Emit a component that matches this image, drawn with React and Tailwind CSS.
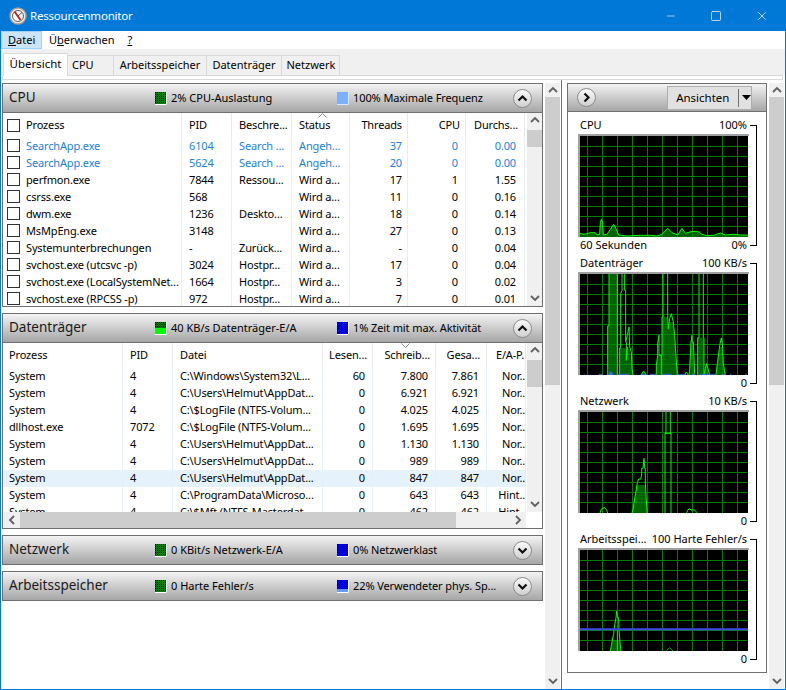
import { X, Minus, Square } from 'lucide-react';

const cpuCols = [
  { w: 'w-[179px]', cell: 'pl-[23px]', head: 'pl-[23px]' },
  { w: 'w-[50px]', cell: 'pl-[7px]', head: 'pl-[7px]' },
  { w: 'w-[60px]', cell: 'pl-[7px]', head: 'pl-[7px]' },
  { w: 'w-[58px]', cell: 'pl-[7px]', head: 'pl-[7px]' },
  { w: 'w-[58px]', cell: 'pr-[5px] text-right', head: 'pr-[5px] justify-end' },
  { w: 'w-[58px]', cell: 'pr-[7px] text-right', head: 'pr-[5px] justify-end' },
  { w: 'w-[59px]', cell: 'pr-[8px] text-right', head: 'pl-[8px]' },
];

const cpuHead = ['Prozess', 'PID', 'Beschre...', 'Status', 'Threads', 'CPU', 'Durchs...'];

const cpuRows = [
  ['SearchApp.exe', '6104', 'Search ...', 'Angeh...', '37', '0', '0.00', true],
  ['SearchApp.exe', '5624', 'Search ...', 'Angeh...', '20', '0', '0.00', true],
  ['perfmon.exe', '7844', 'Ressou...', 'Wird a...', '17', '1', '1.55'],
  ['csrss.exe', '568', '', 'Wird a...', '11', '0', '0.16'],
  ['dwm.exe', '1236', 'Deskto...', 'Wird a...', '18', '0', '0.14'],
  ['MsMpEng.exe', '3148', '', 'Wird a...', '27', '0', '0.13'],
  ['Systemunterbrechungen', '-', 'Zurück...', 'Wird a...', '-', '0', '0.04'],
  ['svchost.exe (utcsvc -p)', '3024', 'Hostpr...', 'Wird a...', '17', '0', '0.04'],
  ['svchost.exe (LocalSystemNet...', '1664', 'Hostpr...', 'Wird a...', '3', '0', '0.02'],
  ['svchost.exe (RPCSS -p)', '972', 'Hostpr...', 'Wird a...', '7', '0', '0.01'],
];

const diskCols = [
  { w: 'w-[120px]', cell: 'pl-[6px]', head: 'pl-[6px]' },
  { w: 'w-[50px]', cell: 'pl-[7px]', head: 'pl-[7px]' },
  { w: 'w-[150px]', cell: 'pl-[7px]', head: 'pl-[7px]' },
  { w: 'w-[50px]', cell: 'pr-[7px] text-right', head: 'pr-[5px] justify-end' },
  { w: 'w-[63px]', cell: 'pr-[7px] text-right', head: 'pr-[5px] justify-end' },
  { w: 'w-[51px]', cell: 'pr-[7px] text-right', head: 'pr-[6px] justify-end' },
  { w: 'w-[39px]', cell: 'pr-0 text-right', head: 'pr-[1px] justify-end' },
];

const diskHead = ['Prozess', 'PID', 'Datei', 'Lesen...', 'Schreib...', 'Gesa...', 'E/A-P.'];

const diskRows = [
  ['System', '4', 'C:\\Windows\\System32\\L...', '60', '7.800', '7.861', 'Nor..'],
  ['System', '4', 'C:\\Users\\Helmut\\AppDat...', '0', '6.921', '6.921', 'Nor..'],
  ['System', '4', 'C:\\$LogFile (NTFS-Volum...', '0', '4.025', '4.025', 'Nor..'],
  ['dllhost.exe', '7072', 'C:\\$LogFile (NTFS-Volum...', '0', '1.695', '1.695', 'Nor..'],
  ['System', '4', 'C:\\Users\\Helmut\\AppDat...', '0', '1.130', '1.130', 'Nor..'],
  ['System', '4', 'C:\\Users\\Helmut\\AppDat...', '0', '989', '989', 'Nor..'],
  ['System', '4', 'C:\\Users\\Helmut\\AppDat...', '0', '847', '847', 'Nor..'],
  ['System', '4', 'C:\\ProgramData\\Microso...', '0', '643', '643', 'Hint..'],
  ['System', '4', 'C:\\$Mft (NTFS-Masterdat...', '0', '462', '462', 'Hint..'],
];

function Chevron({ dir = 'up', className = '' }) {
  const pts = { up: '1,6 5,2 9,6', down: '1,2 5,6 9,2', left: '6,1 2,5 6,9', right: '2,1 6,5 2,9' }[dir];
  const box = dir === 'up' || dir === 'down' ? '0 0 10 8' : '0 0 8 10';
  const size = dir === 'up' || dir === 'down' ? 'w-[10px] h-[8px]' : 'w-[8px] h-[10px]';
  return (
    <svg viewBox={box} className={size + ' ' + className}>
      <polyline points={pts} fill="none" stroke="#606060" strokeWidth="1.8" />
    </svg>
  );
}

function VScroll({ thumb, className = '' }) {
  return (
    <div className={'flex flex-col items-center bg-[#f0f0f0] w-[15px] shrink-0 ' + className}>
      <div className="h-[14px] flex items-center justify-center shrink-0"><Chevron dir="up" /></div>
      <div className={'w-full bg-[#cdcdcd] ' + thumb} />
      <div className="flex-1" />
      <div className="h-[17px] flex items-center justify-center shrink-0"><Chevron dir="down" /></div>
    </div>
  );
}

function Legend({ color, dots = true, fillColor, fillFrom = 13, id }) {
  return (
    <svg width="12" height="13" className="shrink-0">
      <defs>
        <pattern id={id} width="2" height="2" patternUnits="userSpaceOnUse">
          <rect width="2" height="2" fill={color} />
          <rect width="1" height="1" fill="#000" />
        </pattern>
      </defs>
      <rect width="12" height="13" fill={dots ? 'url(#' + id + ')' : color} />
      {fillColor && <rect y={fillFrom} width="12" height={13 - fillFrom} fill={fillColor} />}
      <path d="M11.5 0V12.5H0" fill="none" stroke={dots ? '#fff' : '#d8e6ff'} />
    </svg>
  );
}

function RoundButton({ dir }) {
  const pts = { up: '3.5,9.5 7.5,5.5 11.5,9.5', down: '3.5,5.5 7.5,9.5 11.5,5.5', right: '5.5,3.5 9.5,7.5 5.5,11.5' }[dir];
  return (
    <div className="w-[19px] h-[19px] rounded-full border border-[#8c8c8c] bg-linear-to-b from-[#fafafa] to-[#d0d0d0] flex items-center justify-center shrink-0">
      <svg viewBox="0 0 15 15" className="w-[15px] h-[15px]">
        <polyline points={pts} fill="none" stroke="#111" strokeWidth="2.2" />
      </svg>
    </div>
  );
}

function SectionHeader({ title, legend1, text1, legend2, text2, dir }) {
  return (
    <div className="flex items-center h-[28px] bg-linear-to-b from-[#f4f4f4] to-[#a6a6a6]">
      <div className="w-[152px] pl-[6px] pb-[1px] text-[13.5px] text-[#1a1a1a]">{title}</div>
      {legend1}
      <div className="w-[170px] pl-[4px] whitespace-nowrap">{text1}</div>
      {legend2}
      <div className="flex-1 pl-[4px] tracking-[-0.1px] whitespace-nowrap">{text2}</div>
      <div className="mr-[10px]"><RoundButton dir={dir} /></div>
    </div>
  );
}

function HeadRow({ cols, head, h, check }) {
  return (
    <div className={'relative flex items-center shrink-0 tracking-[-0.15px] ' + h}>
      {check && <div className="absolute left-[4px] top-[6px] w-[13px] h-[13px] border border-[#333]" />}
      {cols.map((c, i) => (
        <div key={i} className={'h-full flex items-center whitespace-nowrap border-r border-[#e9e9e9] ' + c.w + ' ' + c.head}>
          {head[i]}
        </div>
      ))}
    </div>
  );
}

function Row({ cols, row, check, active, lead = 'leading-[17px]' }) {
  const blue = row[7];
  return (
    <div className={'relative flex h-[17px] shrink-0 tracking-[-0.15px] ' + (blue ? 'text-[#1a7fe0] ' : '') + (active ? 'bg-[#e5f1fb]' : '')}>
      {check && <div className="absolute left-[4px] top-[2px] w-[13px] h-[13px] border border-[#333]" />}
      {cols.map((c, i) => (
        <div key={i} className={'whitespace-nowrap overflow-hidden border-r border-[#e5effa] ' + lead + ' ' + c.w + ' ' + c.cell}>
          {row[i]}
        </div>
      ))}
    </div>
  );
}

// grid sits on whole pixels, 15px columns and 10px rows
function Grid() {
  const v = [7.5, 22.5, 37.5, 52.5, 67.5, 82.5, 97.5, 112.5, 127.5, 142.5, 157.5];
  const h = [10.5, 20.5, 30.5, 40.5, 50.5, 60.5, 70.5, 80.5, 90.5];
  return (
    <g stroke="#008000" strokeWidth="1">
      {v.map(x => <line key={x} x1={x} x2={x} y1="0" y2="101" />)}
      {h.map(y => <line key={y} x1="0" x2="168" y1={y} y2={y} />)}
    </g>
  );
}

// curve points below were read off a 3x crop, so scale them back down
function Data({ children }) {
  return <g transform="scale(0.3333) translate(-16 -16)">{children}</g>;
}

function Area({ pts }) {
  return <polygon points={pts} fill="#006400" />;
}

function Line({ pts }) {
  return <polyline points={pts} fill="none" stroke="#00ff00" strokeWidth="3" />;
}

function Frame({ children }) {
  return (
    <div className="w-[171px] h-[103px] border-t-2 border-l-2 border-[#a0a0a0]">
      <svg viewBox="0 0 168 101" className="w-[168px] h-[101px] bg-black block">
        {children}
      </svg>
    </div>
  );
}

function CpuChart() {
  const pts = '16,308 27,311 37,309 47,306 62,306 67,313 75,311 77,276 80,266 84,276 86,313 97,311 107,296 117,281 125,296 132,313 157,316 197,314 227,314 247,316 262,311 279,293 292,306 309,313 322,293 332,308 349,303 369,302 382,311 397,315 417,314 437,307 452,313 477,311 497,313 522,313';
  return (
    <Frame>
      <Data><Area pts={pts + ' 522,319 16,319'} /></Data>
      <Grid />
      <Data><Line pts={pts} /></Data>
    </Frame>
  );
}

function DiskChart() {
  const blue = [[72, 85], [130, 165], [198, 215], [225, 245], [262, 290], [310, 335], [350, 362], [375, 425], [440, 452], [466, 470], [512, 516], [28, 30], [45, 47]];
  return (
    <Frame>
      <Data>
        <Area pts="99,319 99,172 103,172 103,16 128,16 128,319" />
        <Area pts="135,319 135,238 152,238 155,275 158,235 166,250 171,295 175,319" />
        <Area pts="245,319 245,290 249,260 262,260 262,145 279,145 281,180 285,160 296,160 300,200 303,250 308,319" />
        <Area pts="343,319 347,262 349,220 356,220 358,262 360,319" />
        <Area pts="369,319 369,207 388,207 388,319" />
        <Area pts="388,319 392,300 396,285 400,300 405,319" />
        <Area pts="424,319 428,285 432,255 436,235 444,235 446,285 452,319" />
        <Area pts="199,319 207,307 215,319" />
      </Data>
      <Grid />
      <Data>
        <Line pts="99,319 99,172 103,172 103,16" />
        <Line pts="128,16 128,319" />
        <Line pts="135,319 135,238 138,238 138,75 142,65 142,16" />
        <Line pts="150,16 150,65 153,65 153,220 158,200 163,175 165,235 170,250 172,300 175,319" />
        <Line pts="155,220 155,275 158,235" />
        <Line pts="245,319 245,290 249,260 249,225 253,200 253,260 262,260 262,145 265,145 265,16" />
        <Line pts="279,16 279,140 281,180 285,150 290,135 296,160 300,200 303,250 308,319" />
        <Line pts="260,260 260,319" />
        <Line pts="343,319 345,300 347,262 349,220 352,200 352,220 356,220 358,262 360,319" />
        <Line pts="369,319 369,207 373,207 373,16" />
        <Line pts="386,16 386,207 388,207 388,319" />
        <Line pts="388,319 392,300 396,285 400,300 405,319" />
        <Line pts="424,319 428,285 432,255 436,225 440,208 444,235 446,285 452,319" />
        <Line pts="199,319 207,307 215,319" />
        <Line pts="330,319 335,310 340,319" />
        {blue.map(([a, b]) => <line key={a} x1={a} x2={b} y1="317" y2="317" stroke="#4169e1" strokeWidth="3" />)}
        <polygon points="100,319 108,306 118,319" fill="#4169e1" />
      </Data>
    </Frame>
  );
}

function NetChart() {
  return (
    <Frame>
      <Data><Area pts="172,319 180,275 186,235 212,235 216,300 218,319" /></Data>
      <Grid />
      <Data>
        <Line pts="172,319 176,305 180,275 184,255 188,228 192,217 198,217 201,205 201,185 205,185 208,155 210,185 212,185 212,230 216,300 218,319" />
        <Line pts="271,319 271,80 274,80 274,16" />
        <Line pts="287,16 287,80 289,80 289,319" />
        <line x1="271" x2="289" y1="80" y2="80" stroke="#00ff00" strokeWidth="3" />
        <Line pts="76,319 80,307 90,303 96,310 99,319" />
        <Line pts="336,319 340,309 345,307 350,310 360,310 368,319" />
      </Data>
    </Frame>
  );
}

function MemChart() {
  return (
    <Frame>
      <Data>
        <g transform="translate(-43 -43)">
          <polygon points="150,362 157,330 178,330 182,362" fill="#006400" />
        </g>
      </Data>
      <Grid />
      <Data>
        <g transform="translate(-43 -43)">
          <polyline points="150,362 155,335 160,310 163,285 167,262 169,243 171,262 175,262 176,300 180,345 182,362" fill="none" stroke="#00ff00" strokeWidth="3" />
          <line x1="171" x2="171" y1="300" y2="362" stroke="#00ff00" strokeWidth="3" />
          <polyline points="318,362 328,352 338,362" fill="none" stroke="#00a000" strokeWidth="3" />
          <line x1="59" x2="570" y1="297" y2="297" stroke="#3f48e8" strokeWidth="6" />
        </g>
      </Data>
    </Frame>
  );
}

function ChartBlock({ label, top, bottomLeft, bottom, children }) {
  return (
    <div className="flex">
      <div className="w-[171px]">
        <div className="flex justify-between items-center h-[18px] px-[2px] whitespace-nowrap">
          <span>{label}</span>
          <span>{top}</span>
        </div>
        {children}
        <div className="flex justify-between items-center h-[17px] px-[2px]">
          <span>{bottomLeft}</span>
          <span>{bottom}</span>
        </div>
      </div>
      <div className="w-[7px] ml-[1px] mt-[9px] mb-[8px] border-t-[1.5px] border-r-[1.5px] border-b-[1.5px] border-black" />
    </div>
  );
}

export default function App() {
  return (
    <div className="w-[786px] h-[690px] flex flex-col border border-[#0078d7] bg-white overflow-hidden text-[11px] text-black font-['Noto_Sans',sans-serif]">
      {/* title bar */}
      <div className="h-[30px] shrink-0 flex items-center bg-[#0078d7] text-white">
        <svg viewBox="0 0 18 18" className="w-[18px] h-[18px] ml-[8px] mr-[3px]">
          <circle cx="9" cy="9" r="8" fill="#f4efe6" stroke="#a89f92" strokeWidth="1.4" />
          <circle cx="9" cy="9" r="5.5" fill="#fff" stroke="#333" strokeWidth="0.8" />
          <line x1="5.5" y1="4.5" x2="11.5" y2="13" stroke="#d02020" strokeWidth="2" />
          <line x1="9" y1="9" x2="13" y2="5.5" stroke="#222" strokeWidth="0.8" />
        </svg>
        <span className="text-[11.5px] tracking-[-0.2px]">Ressourcenmonitor</span>
        <div className="flex-1" />
        <Minus className="w-[12px] h-[12px] mr-[33px]" strokeWidth={1.2} />
        <Square className="w-[12px] h-[12px] mr-[33px]" strokeWidth={1.4} />
        <X className="w-[14px] h-[14px] mr-[16px]" strokeWidth={1.2} />
      </div>

      {/* menu */}
      <div className="h-[18px] shrink-0 flex items-stretch">
        <div className="w-[41px] pl-[6px] bg-[#cce4f7] border border-[#99d1ff] flex items-center"><span><u>D</u>atei</span></div>
        <div className="pl-[7px] pr-[7px] flex items-center"><span>Ü<u>b</u>erwachen</span></div>
        <div className="px-[6px] flex items-center"><u>?</u></div>
      </div>

      {/* tabs */}
      <div className="h-[26px] shrink-0 flex items-end bg-[#f0f0f0] pl-[2px]">
        <div className="w-[65px] h-[23px] mb-[-1px] pb-[2px] z-10 text-[11.5px] bg-white border border-b-0 border-[#d9d9d9] flex items-center justify-center">Übersicht</div>
        <div className="w-[46px] h-[20px] border border-l-0 border-b-0 border-[#d9d9d9] flex items-center pl-[4px]">CPU</div>
        <div className="w-[93px] h-[20px] border border-l-0 border-b-0 border-[#d9d9d9] flex items-center justify-center">Arbeitsspeicher</div>
        <div className="w-[75px] h-[20px] border border-l-0 border-b-0 border-[#d9d9d9] flex items-center justify-center">Datenträger</div>
        <div className="w-[58px] h-[20px] border border-l-0 border-b-0 border-[#d9d9d9] flex items-center justify-center pl-[1px]">Netzwerk</div>
      </div>
      <div className="h-[5px] shrink-0 mx-[1px] mr-[2px] bg-white border border-[#d9d9d9]" />

      {/* body */}
      <div className="flex flex-1 min-h-0">
        <div className="w-[541px] ml-[1px] pt-[3px] flex flex-col gap-[6px] shrink-0">
          <div className="h-[224px] border border-[#6f6f6f] flex flex-col">
            <div className="border-b border-[#6f6f6f]">
              <SectionHeader
                title="CPU"
                legend1={<Legend id="l1" color="#008000" />}
                text1="2% CPU-Auslastung"
                legend2={<Legend id="l2" color="#7ab0ff" dots={false} />}
                text2="100% Maximale Frequenz"
                dir="up"
              />
            </div>
            <div className="flex flex-1 min-h-0">
              <div className="relative w-[523px] overflow-hidden flex flex-col">
                <HeadRow cols={cpuCols} head={cpuHead} h="h-[24px]" check />
                <svg viewBox="0 0 9 5" className="absolute left-[315px] top-0 w-[9px] h-[5px]">
                  <polyline points="0.5,4.5 4.5,0.5 8.5,4.5" fill="none" stroke="#888" />
                </svg>
                {cpuRows.map((r, i) => <Row key={i} cols={cpuCols} row={r} check />)}
              </div>
              <VScroll thumb="h-[17px] mt-[3px]" className="ml-px" />
            </div>
          </div>

          <div className="h-[216px] border border-[#6f6f6f] flex flex-col">
            <div className="border-b border-[#6f6f6f]">
              <SectionHeader
                title="Datenträger"
                legend1={<Legend id="l3" color="#007000" fillColor="#00ff00" fillFrom={6} />}
                text1="40 KB/s Datenträger-E/A"
                legend2={<Legend id="l4" color="#0000e0" />}
                text2="1% Zeit mit max. Aktivität"
                dir="up"
              />
            </div>
            <div className="flex h-[169px] shrink-0">
              <div className="relative w-[523px] overflow-hidden flex flex-col">
                <HeadRow cols={diskCols} head={diskHead} h="h-[25px]" />
                <svg viewBox="0 0 9 5" className="absolute left-[398px] top-0 w-[9px] h-[5px]">
                  <polyline points="0.5,0.5 4.5,4.5 8.5,0.5" fill="none" stroke="#888" />
                </svg>
                {diskRows.map((r, i) => <Row key={i} cols={diskCols} row={r} active={i === 6} lead="leading-[15px]" />)}
              </div>
              <VScroll thumb="h-[27px] mt-[3px]" className="ml-px" />
            </div>
            <div className="flex-1 flex items-center w-[523px] bg-[#f0f0f0]">
              <div className="w-[17px] flex justify-center"><Chevron dir="left" /></div>
              <div className="w-[436px] h-full bg-[#cdcdcd]" />
              <div className="flex-1" />
              <div className="w-[17px] flex justify-center"><Chevron dir="right" /></div>
            </div>
          </div>

          <div className="h-[30px] border border-[#6f6f6f]">
            <SectionHeader
              title="Netzwerk"
              legend1={<Legend id="l5" color="#008000" />}
              text1="0 KBit/s Netzwerk-E/A"
              legend2={<Legend id="l6" color="#0000e0" />}
              text2="0% Netzwerklast"
              dir="down"
            />
          </div>

          <div className="h-[30px] border border-[#6f6f6f]">
            <SectionHeader
              title="Arbeitsspeicher"
              legend1={<Legend id="l7" color="#008000" />}
              text1="0 Harte Fehler/s"
              legend2={<Legend id="l8" color="#0000e0" fillColor="#6699ff" fillFrom={9} />}
              text2="22% Verwendeter phys. Sp..."
              dir="down"
            />
          </div>
        </div>

        <VScroll thumb="flex-1 mt-0" className="ml-[2px] mt-[3px]" />

        <div className="w-px bg-[#6f6f6f] ml-px shrink-0" />

        <div className="w-[200px] ml-[5px] mt-[3px] mb-[16px] border border-[#6f6f6f] flex flex-col shrink-0">
          <div className="h-[28px] shrink-0 border-b border-[#6f6f6f] flex items-center bg-linear-to-b from-[#f4f4f4] to-[#a6a6a6]">
            <div className="ml-[9px]"><RoundButton dir="right" /></div>
            <div className="flex-1" />
            <div className="w-[85px] h-[24px] mr-[14px] bg-[#e1e1e1] border border-[#adadad] flex items-center">
              <span className="w-[70px] text-center text-[11.5px]">Ansichten</span>
              <div className="w-[1.5px] h-[18px] bg-[#707070]" />
              <svg viewBox="0 0 9 5" className="w-[9px] h-[5px] ml-[3px]"><polygon points="0,0 9,0 4.5,5" fill="#000" /></svg>
            </div>
          </div>
          <div className="pl-[10px] pt-[4px]">
            <ChartBlock label="CPU" top="100%" bottomLeft="60 Sekunden" bottom="0%"><CpuChart /></ChartBlock>
            <ChartBlock label="Datenträger" top="100 KB/s" bottom="0"><DiskChart /></ChartBlock>
            <ChartBlock label="Netzwerk" top="10 KB/s" bottom="0"><NetChart /></ChartBlock>
            <ChartBlock label="Arbeitsspei..." top="100 Harte Fehler/s" bottom="0"><MemChart /></ChartBlock>
          </div>
        </div>

        <VScroll thumb="flex-1" className="ml-[2px] mt-[3px]" />
      </div>
    </div>
  );
}
